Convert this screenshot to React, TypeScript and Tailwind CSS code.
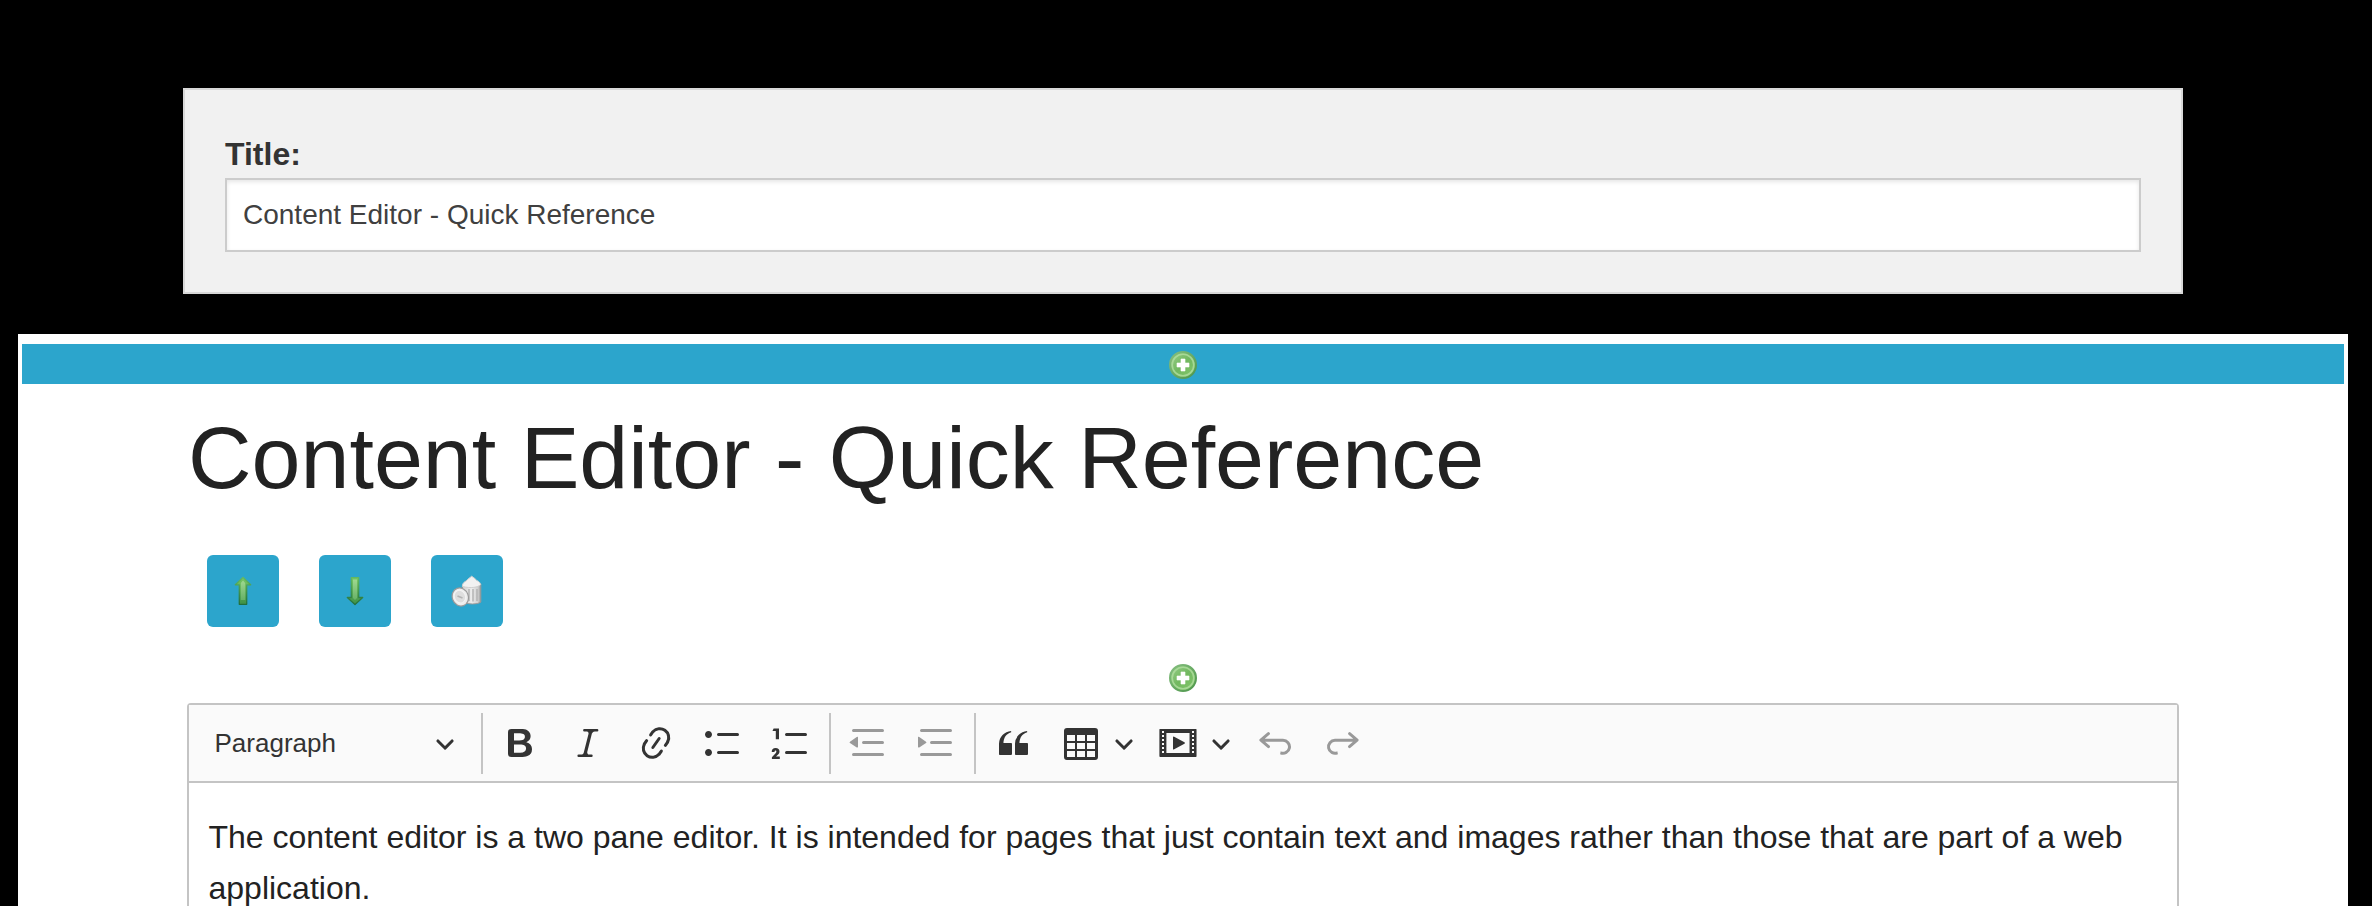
import React from "react";

const ICONS = {
  bold: "M10.187 17H5.773c-.637 0-1.092-.138-1.364-.415-.273-.277-.409-.718-.409-1.323V4.738c0-.617.14-1.062.419-1.332.279-.27.73-.406 1.354-.406h4.68c.69 0 1.288.041 1.793.124.506.083.96.242 1.36.478.341.197.644.447.906.75a3.262 3.262 0 0 1 .808 2.162c0 1.401-.722 2.426-2.167 3.075C15.05 10.175 16 11.315 16 13.01a3.756 3.756 0 0 1-2.296 3.504 6.1 6.1 0 0 1-1.517.377c-.571.073-1.238.11-2 .11zm-.217-6.217H7v4.087h3.069c1.977 0 2.965-.69 2.965-2.072 0-.707-.256-1.22-.768-1.537-.512-.319-1.277-.478-2.296-.478zM7 5.13v3.619h2.606c.729 0 1.292-.067 1.69-.2a1.6 1.6 0 0 0 .91-.765c.165-.267.247-.566.247-.897 0-.707-.26-1.176-.778-1.409-.519-.232-1.31-.348-2.375-.348H7z",
  italic: "m9.586 14.633.021.004c-.036.335.095.655.393.962.082.083.173.15.274.201h1.474a.6.6 0 1 1 0 1.2H5.304a.6.6 0 0 1 0-1.2h1.15c.474-.07.809-.182 1.005-.334.157-.122.291-.32.404-.597l2.416-9.55a1.053 1.053 0 0 0-.281-.823 1.12 1.12 0 0 0-.442-.296H8.15a.6.6 0 0 1 0-1.2h6.443a.6.6 0 1 1 0 1.2h-1.195c-.376.056-.65.155-.823.296-.215.175-.423.439-.623.79l-2.366 9.347z",
  link: "m11.077 15 .991-1.416a.75.75 0 1 1 1.229.86l-1.148 1.64a.748.748 0 0 1-.217.206 5.251 5.251 0 0 1-8.503-5.955.741.741 0 0 1 .12-.274l1.147-1.639a.75.75 0 1 1 1.228.86L4.933 10.7l.006.003a3.75 3.75 0 0 0 6.132 4.294l.006.004zm5.494-5.335a.748.748 0 0 1-.12.274l-1.147 1.639a.75.75 0 1 1-1.228-.86l.86-1.23a3.75 3.75 0 0 0-6.144-4.301l-.86 1.229a.75.75 0 0 1-1.229-.86l1.148-1.64a.748.748 0 0 1 .217-.206 5.251 5.251 0 0 1 8.503 5.955zm-4.563-2.532a.75.75 0 0 1 .184 1.045l-3.155 4.505a.75.75 0 1 1-1.229-.86l3.155-4.506a.75.75 0 0 1 1.045-.184z",
  bullets: "M7 5.75c0 .414.336.75.75.75h9.5a.75.75 0 1 0 0-1.5h-9.5a.75.75 0 0 0-.75.75zm-6 0C1 4.784 1.777 4 2.75 4c.966 0 1.75.777 1.75 1.75 0 .966-.777 1.75-1.75 1.75C1.784 7.5 1 6.723 1 5.75zm6 9c0 .414.336.75.75.75h9.5a.75.75 0 1 0 0-1.5h-9.5a.75.75 0 0 0-.75.75zm-6 0c0-.966.777-1.75 1.75-1.75.966 0 1.75.777 1.75 1.75 0 .966-.777 1.75-1.75 1.75-.966 0-1.75-.777-1.75-1.75z",
  numbers: "M7 5.75c0 .414.336.75.75.75h9.5a.75.75 0 1 0 0-1.5h-9.5a.75.75 0 0 0-.75.75zM1.300 2.700H4V8.100H2.400V3.950H.750zM.450 18V17.100L2.300 15.150C2.800 14.600 2.850 13.750 2.250 13.700 1.900 13.700 1.750 14 1.750 14.450H.350C.350 13.200 1.050 12.450 2.300 12.450 3.550 12.450 4.250 13.150 4.250 14.250 4.250 15.050 3.900 15.450 3.300 16L2.500 16.800H4.400V18zM7 14.750a.75.75 0 0 1 .75-.75h9.5a.75.75 0 1 1 0 1.5h-9.5a.75.75 0 0 1-.75-.75z",
  outdent: "M2 3.75c0 .414.336.75.75.75h14.5a.75.75 0 1 0 0-1.5H2.75a.75.75 0 0 0-.75.75zm5 6c0 .414.336.75.75.75h9.5a.75.75 0 1 0 0-1.5h-9.5a.75.75 0 0 0-.75.75zM2.75 16.5h14.5a.75.75 0 1 0 0-1.5H2.75a.75.75 0 1 0 0 1.5zm1.618-9.55L.98 9.358a.4.4 0 0 0 .013.661l3.39 2.207A.4.4 0 0 0 5 11.892V7.275a.4.4 0 0 0-.632-.326z",
  indent: "M2 3.75c0 .414.336.75.75.75h14.5a.75.75 0 1 0 0-1.5H2.75a.75.75 0 0 0-.75.75zm5 6c0 .414.336.75.75.75h9.5a.75.75 0 1 0 0-1.5h-9.5a.75.75 0 0 0-.75.75zM2.75 16.5h14.5a.75.75 0 1 0 0-1.5H2.75a.75.75 0 1 0 0 1.5zM1.632 6.95 5.02 9.358a.4.4 0 0 1-.013.661l-3.39 2.207A.4.4 0 0 1 1 11.892V7.275a.4.4 0 0 1 .632-.326z",
  quote: "M3 10.423a6.5 6.5 0 0 1 6.056-6.408l.038.67C6.448 5.423 5.354 7.663 5.22 10H9c.552 0 .5.432.5.986v4.511c0 .554-.448.503-1 .503h-5c-.552 0-.5-.449-.5-1.003v-4.574zm8 0a6.5 6.5 0 0 1 6.056-6.408l.038.67c-2.646.739-3.74 2.979-3.873 5.315H17c.552 0 .5.432.5.986v4.511c0 .554-.448.503-1 .503h-5c-.552 0-.5-.449-.5-1.003v-4.574z",
  table: "M3 6v3h4V6H3zm0 4v3h4v-3H3zm0 4v3h4v-3H3zm5 3h4v-3H8v3zm5 0h4v-3h-4v3zm4-4v-3h-4v3h4zm0-4V6h-4v3h4zm1.5 8a1.5 1.5 0 0 1-1.5 1.5H3A1.5 1.5 0 0 1 1.5 17V4A1.5 1.5 0 0 1 3 2.500H17A1.500 1.500 0 0 1 18.500 4v13zM12 13v-3H8v3h4zm0-4V6H8v3h4z",
  media: "M18.68 3.03c.6 0 .59-.03.59.55v12.84c0 .59.01.56-.59.56H1.29c-.6 0-.59.03-.59-.56V3.58c0-.58-.01-.55.6-.55h17.38zM15.77 15V5H4.2v10h11.57zM2 4v1h1V4H2zm0 2v1h1V6H2zm0 2v1h1V8H2zm0 2v1h1v-1H2zm0 2v1h1v-1H2zm0 2v1h1v-1H2zM17 4v1h1V4h-1zm0 2v1h1V6h-1zm0 2v1h1V8h-1zm0 2v1h1v-1h-1zm0 2v1h1v-1h-1zm0 2v1h1v-1h-1zM7.5 7.177a.4.4 0 0 1 .593-.351l5.133 2.824a.4.4 0 0 1 0 .7l-5.133 2.824a.4.4 0 0 1-.593-.35V7.177z",
  undo: "m5.042 9.367 2.189 1.837a.75.75 0 0 1-.965 1.149l-3.788-3.18a.747.747 0 0 1-.21-.284.75.75 0 0 1 .17-.945L6.23 4.762a.75.75 0 1 1 .964 1.15L4.863 7.866h8.917A.75.75 0 0 1 14 7.9a4 4 0 1 1-1.477 7.718l.344-1.489a2.5 2.5 0 1 0 1.094-4.73l.008-.032H5.042z",
  redo: "m14.958 9.367-2.189 1.837a.75.75 0 0 0 .965 1.149l3.788-3.18a.747.747 0 0 0 .21-.284.75.75 0 0 0-.17-.945L13.77 4.762a.75.75 0 1 0-.964 1.15l2.331 1.955H6.22A.75.75 0 0 0 6 7.9a4 4 0 1 0 1.477 7.718l-.344-1.489A2.5 2.5 0 1 1 6.039 9.4l-.008-.032h8.927z",
};

function Icon({ name, className = "" }: { name: keyof typeof ICONS; className?: string }) {
  return (
    <svg viewBox="0 0 20 20" className={`size-10 shrink-0 ${className}`} fill="currentColor" fillRule={name === "media" || name === "table" ? "evenodd" : "nonzero"}>
      <path d={ICONS[name]} />
    </svg>
  );
}

function Chevron({ className = "" }: { className?: string }) {
  return (
    <svg viewBox="0 0 10 10" className={`size-5 shrink-0 ${className}`} fill="currentColor">
      <path d="M.941 4.523a.75.75 0 1 1 1.06-1.06l3.006 3.005 3.005-3.005a.75.75 0 1 1 1.06 1.06l-3.549 3.55a.75.75 0 0 1-1.168-.136L.941 4.523z" />
    </svg>
  );
}

function Separator({ className = "" }: { className?: string }) {
  return <div className={`h-[61px] w-0.5 shrink-0 bg-[#c4c4c4] ${className}`} />;
}

function AddIcon() {
  return (
    <svg viewBox="0 0 32 32" className="size-8">
      <defs>
        <linearGradient id="add-fill" x1="0" y1="0" x2="1" y2="1">
          <stop offset="0" stopColor="#9ad08b" />
          <stop offset="0.5" stopColor="#72b860" />
          <stop offset="1" stopColor="#84c96c" />
        </linearGradient>
        <linearGradient id="add-edge" x1="0" y1="0" x2="1" y2="1">
          <stop offset="0" stopColor="#86bf80" />
          <stop offset="1" stopColor="#4c954a" />
        </linearGradient>
      </defs>
      <circle cx="16" cy="16" r="13" fill="url(#add-fill)" stroke="url(#add-edge)" strokeWidth="2" />
      <circle cx="16" cy="16" r="10.800" fill="none" stroke="#b5e0a5" strokeWidth="1.600" opacity=".75" />
      <path d="M14 10h4v4h4v4h-4v4h-4v-4h-4v-4h4z" fill="#fff" stroke="#fff" strokeWidth=".6" strokeLinejoin="round" />
    </svg>
  );
}

function ArrowIcon({ down = false }: { down?: boolean }) {
  return (
    <svg viewBox="0 0 32 32" className="size-8">
      <defs>
        <linearGradient id="arrow-fill" x1="0" y1="0" x2="0" y2="1">
          <stop offset="0" stopColor="#78c765" />
          <stop offset="1" stopColor="#3f9146" />
        </linearGradient>
        <linearGradient id="arrow-edge" x1="0" y1="0" x2="0" y2="1">
          <stop offset="0" stopColor="#62b860" />
          <stop offset="1" stopColor="#226f3a" />
        </linearGradient>
        <linearGradient id="arrow-shine" x1="0" y1="0" x2="0" y2="1">
          <stop offset="0" stopColor="#a6dc98" />
          <stop offset="1" stopColor="#6db56c" />
        </linearGradient>
      </defs>
      <path
        d={down ? "M12.300 2.700h7.400v19.800h4L16 29.600 8.300 22.500h4z" : "M16 2.400 23.700 9.800h-4v19.500h-7.400V9.800h-4z"}
        fill="url(#arrow-fill)"
        stroke="url(#arrow-edge)"
        strokeWidth="1.300"
        strokeLinejoin="round"
      />
      <path d={down ? "M14 4.500h4v18.500l-2 2-2-2z" : "M16 5.500l2.200 2.500v17h-4.400V8z"} fill="url(#arrow-shine)" opacity=".85" />
    </svg>
  );
}

function TrashIcon() {
  return (
    <svg viewBox="0 0 32 32" className="size-8">
      <defs>
        <linearGradient id="bin" x1="0" x2="1">
          <stop offset="0" stopColor="#d0d0d0" />
          <stop offset=".5" stopColor="#ececec" />
          <stop offset=".85" stopColor="#cfcfcf" />
          <stop offset="1" stopColor="#9a9a9a" />
        </linearGradient>
      </defs>
      <path d="M11.500 10v15q2 4 10 4 6 0 8.300-1.800V9z" fill="url(#bin)" stroke="#999" />
      <path d="M18 14v12M22 14v12.500M26 14v12" stroke="#b4b4b4" strokeWidth="1.500" />
      <path d="M11.300 11.500C11.500 6.500 15 7 16.500 4.500L20.700 1.200 24.500 4C25 6 28.500 5.500 29.700 9.500 27 12.500 20 13.500 11.300 11.500z" fill="#f1f1f1" stroke="#cfcfcf" />
      <ellipse cx="9.300" cy="22" rx="8" ry="9.200" transform="rotate(-20 9.300 22)" fill="#ededed" stroke="#9a9a9a" strokeWidth="1.200" />
      <ellipse cx="8.900" cy="21.700" rx="5.500" ry="6.500" transform="rotate(-25 8.900 21.700)" fill="#dedede" stroke="#f4f4f4" />
      <path d="m6.500 21 5 2" stroke="#b4b4b4" strokeWidth="1.800" />
    </svg>
  );
}

function ActionButton({ label, children }: { label: string; children: React.ReactNode }) {
  return (
    <button aria-label={label} className="flex size-[72px] items-center justify-center rounded-md bg-[#2ca5cc]">
      {children}
    </button>
  );
}

export default function App() {
  return (
    <div className="flex h-[906px] w-[2372px] flex-col overflow-hidden bg-black font-['Liberation_Sans',Arial,sans-serif]">
      <section className="mt-[88px] ml-[183px] h-[206px] w-[2000px] shrink-0 border-2 border-[#d8d8d8] bg-[#f1f1f1] px-10 pt-[40px]">
        <label className="block h-12 text-[32px] leading-[48px] font-bold text-[#333]">Title:</label>
        <div className="flex h-[74px] items-center border-2 border-[#ccc] bg-white px-4 text-[28px] leading-8 text-[#404040] shadow-[inset_0_2px_4px_rgba(0,0,0,0.1)]">
          Content Editor - Quick Reference
        </div>
      </section>

      <main className="mt-10 ml-[18px] flex min-h-0 w-[2330px] flex-1 flex-col bg-white pt-2.5">
        <div className="mx-1 flex h-10 shrink-0 justify-center bg-[#2ca5cc] pt-[5px]">
          <AddIcon />
        </div>
        <h1 className="mt-[12px] ml-[170px] shrink-0 text-[88px] leading-[124px] text-[#222]">Content Editor - Quick Reference</h1>
        <div className="mt-[35px] ml-[189px] flex shrink-0 gap-10">
          <ActionButton label="Move up"><ArrowIcon /></ActionButton>
          <ActionButton label="Move down"><ArrowIcon down /></ActionButton>
          <ActionButton label="Delete"><TrashIcon /></ActionButton>
        </div>
        <div className="mt-[35px] flex shrink-0 justify-center">
          <AddIcon />
        </div>

        <div className="mt-[9px] ml-[169px] h-[240px] w-[1992px] shrink-0 rounded-t-[4px] border-2 border-[#c4c4c4]">
          <div className="flex h-[78px] items-center border-b-2 border-[#c4c4c4] bg-[#fafafa] text-[#333]">
            <span className="ml-[25.500px] w-[220.500px] text-[26px] leading-8">Paragraph</span>
            <Chevron />
            <Separator className="ml-[26px]" />
            <Icon name="bold" className="ml-[17px]" />
            <Icon name="italic" className="ml-7" />
            <Icon name="link" className="ml-7" />
            <Icon name="bullets" className="ml-[27px]" />
            <Icon name="numbers" className="ml-7" />
            <Separator className="ml-[18px]" />
            <div className="ml-[17px] flex gap-7 text-[#999]">
              <Icon name="outdent" />
              <Icon name="indent" />
            </div>
            <Separator className="ml-[18px]" />
            <Icon name="quote" className="ml-[17px]" />
            <Icon name="table" className="ml-7" />
            <Chevron className="ml-[13px]" />
            <Icon name="media" className="ml-[24px]" />
            <Chevron className="ml-[13px]" />
            <div className="ml-[24px] flex gap-7 text-[#999]">
              <Icon name="undo" />
              <Icon name="redo" />
            </div>
          </div>
          <p className="px-[19.500px] pt-[29px] text-[32px] leading-[51.200px] text-[#222]">
            The content editor is a two pane editor. It is intended for pages that just contain text and images rather than those that are part of a web application.
          </p>
        </div>
      </main>
    </div>
  );
}
